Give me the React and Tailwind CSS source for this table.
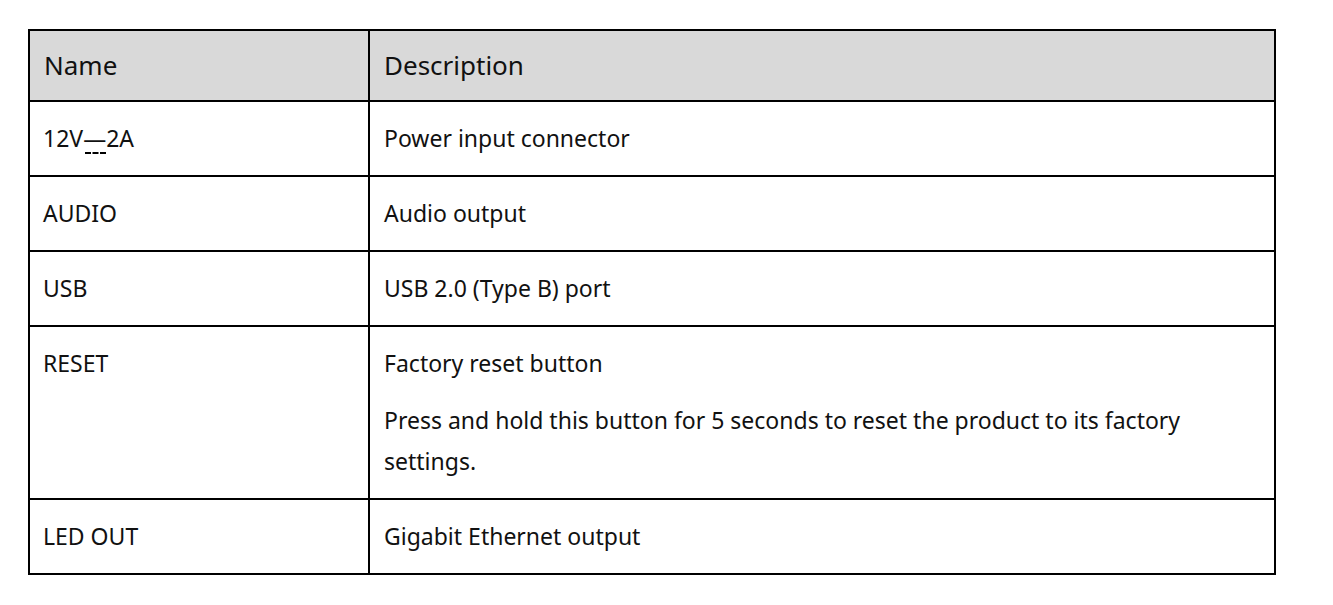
const ROWS = [
  { name: 'dc', desc: ['Power input connector'] },
  { name: 'AUDIO', desc: ['Audio output'] },
  { name: 'USB', desc: ['USB 2.0 (Type B) port'] },
  {
    name: 'RESET',
    desc: [
      'Factory reset button',
      'Press and hold this button for 5 seconds to reset the product to its factory settings.',
    ],
  },
  { name: 'LED OUT', desc: ['Gigabit Ethernet output'] },
];

// 12V⎓2A — DC symbol drawn as a dash with a dashed line under it
const DcLabel = () => (
  <span>
    12V
    <span className="relative inline-block">
      —
      <span className="absolute left-[2px] right-[0px] top-[34px] border-t-2 border-dashed border-black" />
    </span>
    2A
  </span>
);

export default function App() {
  return (
    <div className="min-h-[605px] bg-white pt-[29px] pl-[28px] font-['Noto_Sans',sans-serif] text-[#111]">
      <table className="w-[1248px] border-collapse border-2 border-black">
        <thead>
          <tr className="bg-[#d9d9d9]">
            <th className="w-[340px] border-2 border-black px-[14px] py-[16px] text-left text-[26px] font-normal leading-[37px]">
              Name
            </th>
            <th className="border-2 border-black px-[14px] py-[16px] text-left text-[26px] font-normal leading-[37px]">
              Description
            </th>
          </tr>
        </thead>
        <tbody>
          {ROWS.map((row) => (
            <tr key={row.name}>
              <td className="border-2 border-black pl-[13px] pr-[14px] py-[16px] align-top text-[23px] leading-[41px]">
                {row.name === 'dc' ? <DcLabel /> : row.name}
              </td>
              <td className="border-2 border-black px-[14px] py-[16px] align-top text-[23px] leading-[41px]">
                <div className="flex flex-col gap-[16px] pr-[40px]">
                  {row.desc.map((d) => (
                    <p key={d}>{d}</p>
                  ))}
                </div>
              </td>
            </tr>
          ))}
        </tbody>
      </table>
    </div>
  );
}
